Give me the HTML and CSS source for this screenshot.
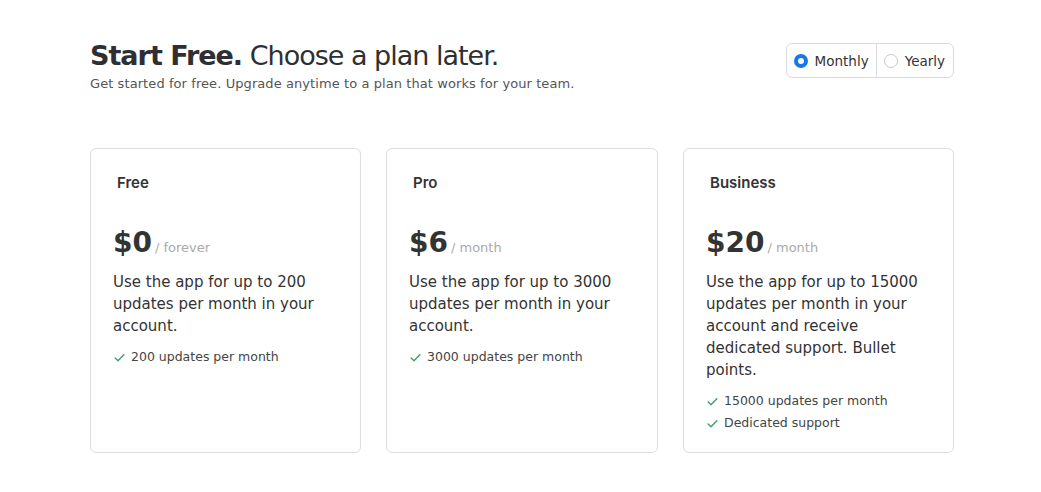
FILE: index.html
```html
<!DOCTYPE html>
<html lang="en">
<head>
<meta charset="utf-8">
<title>Pricing</title>
<link rel="stylesheet" href="styles.css">
</head>
<body>
<main class="page">
  <header class="head">
    <div class="intro">
      <h1 class="title"><strong>Start Free.</strong> Choose a plan later.</h1>
      <p class="sub">Get started for free. Upgrade anytime to a plan that works for your team.</p>
    </div>
    <div class="toggle">
      <label class="opt"><span class="radio on"></span>Monthly</label>
      <label class="opt"><span class="radio"></span>Yearly</label>
    </div>
  </header>
  <section class="cards">
    <article class="card">
      <h2 class="name">Free</h2>
      <div class="price"><span class="amt">$0</span><span class="per">/ forever</span></div>
      <p class="desc">Use the app for up to 200 updates per month in your account.</p>
      <ul class="feats">
        <li><svg class="chk" viewBox="0 0 12 12"><path d="M2 6.5l2.6 2.5L10 3.5"/></svg>200 updates per month</li>
      </ul>
    </article>
    <article class="card">
      <h2 class="name">Pro</h2>
      <div class="price"><span class="amt">$6</span><span class="per">/ month</span></div>
      <p class="desc">Use the app for up to 3000 updates per month in your account.</p>
      <ul class="feats">
        <li><svg class="chk" viewBox="0 0 12 12"><path d="M2 6.5l2.6 2.5L10 3.5"/></svg>3000 updates per month</li>
      </ul>
    </article>
    <article class="card">
      <h2 class="name">Business</h2>
      <div class="price"><span class="amt">$20</span><span class="per">/ month</span></div>
      <p class="desc">Use the app for up to 15000 updates per month in your account and receive dedicated support. Bullet points.</p>
      <ul class="feats">
        <li><svg class="chk" viewBox="0 0 12 12"><path d="M2 6.5l2.6 2.5L10 3.5"/></svg>15000 updates per month</li>
        <li><svg class="chk" viewBox="0 0 12 12"><path d="M2 6.5l2.6 2.5L10 3.5"/></svg>Dedicated support</li>
      </ul>
    </article>
  </section>
</main>
</body>
</html>
```
FILE: styles.css
```css
* { box-sizing: border-box; }
body {
  margin: 0;
  background: #fff;
  color: #333;
  font-family: "DejaVu Sans", "Open Sans", sans-serif;
}
.page {
  width: 864px;
  margin-left: 90px;
  padding-top: 38px;
}
.head {
  display: flex;
  justify-content: space-between;
  align-items: flex-start;
}
.title {
  margin: 0;
  font-size: 27px;
  line-height: 36px;
  font-weight: 400;
  letter-spacing: -1px;
  color: #2f2f33;
}
.title strong { font-weight: 700; }
.sub {
  margin: 0;
  font-size: 13px;
  line-height: 20px;
  letter-spacing: 0.08px;
  color: #555;
}
.toggle {
  display: flex;
  margin-top: 5px;
  border: 1px solid #d9dbe4;
  border-radius: 6px;
  height: 35px;
}
.opt {
  display: flex;
  align-items: center;
  gap: 7px;
  padding: 0 7px 0 7px;
  font-size: 13.5px;
  color: #333;
}
.opt + .opt { border-left: 1px solid #d9dbe4; padding-right: 8px; }
.radio {
  width: 14px;
  height: 14px;
  border-radius: 50%;
  border: 1px solid #c8c8cc;
  background: #fff;
}
.radio.on { border: 4px solid #1677e8; }
.cards {
  display: grid;
  grid-template-columns: 271px 272px 271px;
  gap: 25px;
  margin-top: 54px;
}
.card {
  height: 305px;
  border: 1px solid #dcdde6;
  border-radius: 6px;
  padding: 24px 22px;
}
.name {
  margin: 0 0 32px 4px;
  font-family: Inter, "Liberation Sans", sans-serif;
  font-size: 15px;
  line-height: 20px;
  font-weight: 600;
  color: #333;
}
.price {
  display: flex;
  align-items: baseline;
  gap: 3px;
}
.amt {
  font-size: 28px;
  line-height: 36px;
  font-weight: 700;
  color: #333;
}
.per {
  font-size: 13px;
  color: #aaa;
}
.desc {
  margin: 10px 0 9px;
  font-size: 15px;
  line-height: 22px;
  color: #333;
}
.feats {
  list-style: none;
  margin: 0;
  padding: 0;
  font-size: 12.5px;
  line-height: 22px;
  color: #444;
}
.feats li {
  display: flex;
  align-items: center;
  gap: 5px;
}
.chk {
  width: 13px;
  height: 13px;
  fill: none;
  stroke: #38a169;
  stroke-width: 1.3;
  stroke-linecap: round;
  stroke-linejoin: round;
}
```
